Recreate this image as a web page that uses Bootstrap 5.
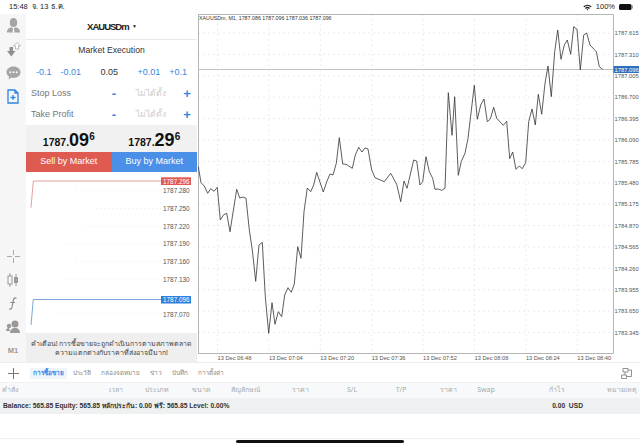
<!DOCTYPE html>
<html lang="th">

<head>
    <meta charset="UTF-8">
    <meta name="viewport" content="width=device-width, initial-scale=1.0">
    <title>MT5 XAUUSDm</title>
    <link href="https://cdn.jsdelivr.net/npm/bootstrap@5.3.3/dist/css/bootstrap.min.css" rel="stylesheet">
    <style>
        html, body { width: 640px; height: 447px; overflow: hidden; background: #fff; }
        body { font-family: "Liberation Sans", "Noto Sans", sans-serif; color: #222; font-size: 10px; line-height: 1; }
        .status-row { height: 14px; padding: 0 7px 0 9px; font-size: 7.5px; color: #222; }
        .main-row { height: 348px; background: #f6f6f6; }
        .side-rail { width: 26px; background: #f6f6f6; }
        .rail-btn { height: 23.7px; width: 26px; }
        .rail-btn.low { height: 23.4px; }
        .order-panel { width: 171px; background: #fff; }
        .symbol-head { height: 26px; font-size: 9.5px; font-weight: 700; letter-spacing: -1px; border-bottom: 1px solid #e8e8e8; }
        .exec-title { height: 21px; font-size: 8.6px; color: #333; }
        .step-row { height: 22px; padding: 0 10px; font-size: 9px; color: #3b86e0; }
        .step-row .vol { color: #333; }
        .step-group { gap: 9px; }
        .level-row { height: 21px; padding: 0 4px 0 5px; color: #777; font-size: 9px; }
        .level-row b { color: #2f86e6; font-weight: 700; font-size: 13px; width: 12px; text-align: center; }
        .level-row .unset { color: #ccc; font-size: 8.5px; width: 61px; text-align: center; font-family: "Noto Sans", sans-serif; }
        .price-row { height: 27px; background: #f1f1f1; font-weight: 700; font-size: 10.5px; color: #111; }
        .price-cell { width: 50%; padding-top: 2px; }
        .price-cell .big { font-size: 18px; }
        .price-cell sup { font-size: 10px; top: -.55em; }
        .trade-btn { width: 50%; height: 20px; border-radius: 0; border: 0; padding: 0; font-size: 9px; color: #fff; --bs-btn-color: #fff; }
        .trade-sell { background: #df5a50; }
        .trade-buy { background: #4a90e8; }
        .tick-box { height: 161px; }
        .warn-box { height: 29px; padding-top: 6px; background: #efefef; color: #444; font-size: 7px; line-height: 9px; white-space: nowrap; font-family: "Noto Sans", "Liberation Sans", sans-serif; }
        .chart-side { background: #fff; }
        svg text { font-family: "Liberation Sans", sans-serif; }
        .tab-row { height: 21px; padding-top: 2px; border-top: 1px solid #eee; border-bottom: 1px solid #f1f1f1; }
        .tab-add { width: 26px; }
        .tab-link { font-size: 6.4px; color: #888; margin-right: 10px; font-family: "Noto Sans", sans-serif; }
        .tab-link.on { color: #2f86e6; font-weight: 700; background: #eef5fd; padding: 2px 3px; margin-left: 4px; margin-right: 6px; }
        .head-row { height: 15px; background: #f7f9fb; color: #aaa; font-size: 7px; font-family: "Noto Sans", "Liberation Sans", sans-serif; position: relative; }
        .head-row > span { position: absolute; top: 3px; transform: translateX(-50%); }
        .sum-row { height: 16px; padding: 0 57px 0 3px; background: #eef0f1; color: #333; font-size: 6.7px; font-weight: 700; font-family: "Liberation Sans", "Noto Sans", sans-serif; }
        .foot-line { height: 25px; border-bottom: 1px solid #f0f0f0; }
        .home-bar { width: 168px; height: 3px; background: #111; border-radius: 2px; margin: 1px auto 0; }
    </style>
</head>

<body>
    <div class="status-row d-flex justify-content-between align-items-center">
        <div>15:48&nbsp; จ. 13 ธ.ค.</div>
        <div class="d-flex align-items-center gap-1">
            <svg width="9" height="7" viewBox="0 0 9 7"><path d="M.3 2.400a6 6 0 0 1 8.400 0L7.800 3.300a4.800 4.800 0 0 0-6.600 0zM2 4a3.600 3.600 0 0 1 5 0l-.9.9a2.300 2.300 0 0 0-3.200 0zM3.600 5.500a1.300 1.300 0 0 1 1.800 0L4.500 6.600z" fill="#222"/></svg>
            <span>100%</span>
            <svg width="14" height="6" viewBox="0 0 14 6"><rect width="12.500" height="6" rx="1.500" fill="#111"/><rect x="13" y="1.500" width="1" height="3" fill="#999"/></svg>
        </div>
    </div>

    <div class="main-row d-flex">
        <div class="side-rail d-flex flex-column">
            <div class="rail-btn d-flex justify-content-center align-items-center">
                <svg width="15" height="15" viewBox="0 0 15 15" fill="#a5a5a5"><ellipse cx="7.500" cy="4.500" rx="3.700" ry="4.500"/><path d="M1 14.500c0-3.500 2-5 4.500-5.300L7.500 11l2-1.800c2.500.3 4.500 1.800 4.500 5.300z"/><path d="M7 11h1l.5 3.500h-2z" fill="#fff"/></svg>
            </div>
            <div class="rail-btn d-flex justify-content-center align-items-center">
                <svg width="15" height="15" viewBox="0 0 15 15"><path d="M1 9h2.500V5h3.500v4h2.500l-4.200 5.500z" fill="#8f8f8f"/><path d="M9.500 7V4H7.500L11 .5 14.500 4H12.500v3z" fill="#fff" stroke="#aaa" stroke-width=".8"/></svg>
            </div>
            <div class="rail-btn d-flex justify-content-center align-items-center">
                <svg width="15" height="14" viewBox="0 0 15 14"><path d="M7.500.5c3.900 0 7 2.500 7 5.700s-3.100 5.700-7 5.700c-.8 0-1.500-.1-2.200-.3L2.500 13.500l.6-3C1.500 9.500.5 8 .5 6.200.5 3 3.600.5 7.500.5z" fill="#a5a5a5"/><circle cx="4.300" cy="6.200" r="1" fill="#fff"/><circle cx="7.500" cy="6.200" r="1" fill="#fff"/><circle cx="10.700" cy="6.200" r="1" fill="#fff"/></svg>
            </div>
            <div class="rail-btn d-flex justify-content-center align-items-center">
                <svg width="12" height="15" viewBox="0 0 12 15" fill="none" stroke="#2f86e6" stroke-width="1.300"><path d="M1 1h7l3 3v10H1zM8 1v3h3M3.500 8.500h5M6 6v5"/></svg>
            </div>
            <div class="flex-grow-1"></div>
            <div class="rail-btn low d-flex justify-content-center align-items-center">
                <svg width="13" height="13" viewBox="0 0 13 13" fill="none" stroke="#aaa"><path d="M6.500 0v5M6.500 8v5M0 6.500h5M8 6.500h5"/></svg>
            </div>
            <div class="rail-btn low d-flex justify-content-center align-items-center">
                <svg width="12" height="14" viewBox="0 0 12 14" fill="#999"><path d="M3 0v3M9 1v3M3 11v3M9 10v3" stroke="#999"/><rect x="1" y="3" width="4" height="8" fill="none" stroke="#999"/><rect x="7" y="4" width="4" height="6"/></svg>
            </div>
            <div class="rail-btn low d-flex justify-content-center align-items-center">
                <svg width="10" height="13" viewBox="0 0 10 13" fill="none" stroke="#888" stroke-width="1.100"><path d="M8.500 1.200C6 .2 5.500 2 5 5L4 10c-.4 2-1.500 2.500-3 1.800M2.500 5.500h4.500"/></svg>
            </div>
            <div class="rail-btn low d-flex justify-content-center align-items-center">
                <svg width="15" height="13" viewBox="0 0 15 13" fill="#999"><circle cx="9" cy="4" r="3.500"/><path d="M4 13c0-3 2-5 5-5s5 2 5 5z"/><circle cx="3" cy="6" r="2.200"/><path d="M0 11c0-2 1-3 3-3l1 3z"/></svg>
            </div>
            <div class="rail-btn low d-flex justify-content-center align-items-center fw-bold" style="color:#999;font-size:7.5px">M1</div>
        </div>

        <div class="order-panel d-flex flex-column">
            <div class="symbol-head d-flex justify-content-center align-items-center">XAUUSDm&nbsp;&nbsp;<span style="font-size:5px">▼</span></div>
            <div class="exec-title d-flex justify-content-center align-items-center">Market Execution</div>
            <div class="step-row d-flex justify-content-between align-items-center">
                <div class="d-flex step-group"><span>-0.1</span><span>-0.01</span></div>
                <span class="vol">0.05</span>
                <div class="d-flex step-group"><span>+0.01</span><span>+0.1</span></div>
            </div>
            <div class="level-row d-flex align-items-center">
                <span class="flex-grow-1">Stop Loss</span>
                <b>-</b><span class="unset">ไม่ได้ตั้ง</span><b>+</b>
            </div>
            <div class="level-row d-flex align-items-center">
                <span class="flex-grow-1">Take Profit</span>
                <b>-</b><span class="unset">ไม่ได้ตั้ง</span><b>+</b>
            </div>
            <div class="price-row d-flex align-items-center">
                <div class="price-cell text-center">1787.<span class="big">09</span><sup>6</sup></div>
                <div class="price-cell text-center">1787.<span class="big">29</span><sup>6</sup></div>
            </div>
            <div class="d-flex">
                <button type="button" class="btn trade-btn trade-sell">Sell by Market</button>
                <button type="button" class="btn trade-btn trade-buy">Buy by Market</button>
            </div>
            <div class="tick-box">
                <svg width="171" height="161" viewBox="0 0 171 161">
                    <g stroke="#ddd" stroke-width=".6" stroke-dasharray="1 3">
                        <path d="M50 18.500h85M70 36.500h65M60 54.500h75M40 72h95M50 89.500h85M40 107h95M30 142h105"/>
                    </g>
                    <path d="M5 35.700L7.300 9H135" fill="none" stroke="#e6a19b"/>
                    <path d="M5 153L7.300 127.500H135" fill="none" stroke="#7ea6d8"/>
                    <g font-size="6.400" fill="#555">
                        <text x="137" y="21">1787.280</text>
                        <text x="137" y="39">1787.250</text>
                        <text x="137" y="57">1787.220</text>
                        <text x="137" y="74.300">1787.190</text>
                        <text x="137" y="92">1787.160</text>
                        <text x="137" y="110">1787.130</text>
                        <text x="137" y="144.500">1787.070</text>
                    </g>
                    <rect x="135" y="5.300" width="30" height="7.700" fill="#df5a50"/>
                    <text x="137" y="11.500" font-size="6.400" fill="#fff">1787.296</text>
                    <rect x="135" y="124" width="30" height="7.500" fill="#2f7fdc"/>
                    <text x="137" y="130" font-size="6.400" fill="#fff">1787.096</text>
                </svg>
            </div>
            <div class="warn-box text-center">คำเตือน! การซื้อขายจะถูกดำเนินการตามสภาพตลาด<br>ความแตกต่างกับราคาที่ส่งอาจมีมาก!</div>
        </div>

        <div class="chart-side flex-grow-1">
            <svg id="price-chart" width="443" height="348" viewBox="197 14 443 348"></svg>
        </div>
    </div>

    <div class="tab-row d-flex align-items-center">
        <div class="tab-add text-center">
            <svg width="11" height="11" viewBox="0 0 11 11" fill="none" stroke="#777"><path d="M5.500 0v11M0 5.500h11"/></svg>
        </div>
        <span class="tab-link on">การซื้อขาย</span>
        <span class="tab-link">ประวัติ</span>
        <span class="tab-link">กล่องจดหมาย</span>
        <span class="tab-link">ข่าว</span>
        <span class="tab-link">บันทึก</span>
        <span class="tab-link">การตั้งค่า</span>
        <div class="flex-grow-1"></div>
        <svg class="me-2" width="11" height="11" viewBox="0 0 11 11" fill="none" stroke="#777" stroke-width=".8"><path d="M2 .5h5v3.500H2zM.5 7h5v3.500H.5zM7 2h3.500v6.500H6M4 4v3"/></svg>
    </div>
    <div class="head-row">
        <span style="left:10px">คำสั่ง</span>
        <span style="left:116px">เวลา</span>
        <span style="left:157px">ประเภท</span>
        <span style="left:201px">ขนาด</span>
        <span style="left:245px">สัญลักษณ์</span>
        <span style="left:300px">ราคา</span>
        <span style="left:352px">S/L</span>
        <span style="left:401px">T/P</span>
        <span style="left:448px">ราคา</span>
        <span style="left:486px">Swap</span>
        <span style="left:557px">กำไร</span>
        <span style="left:622px">หมายเหตุ</span>
    </div>
    <div class="sum-row d-flex justify-content-between align-items-center">
        <span>Balance: 565.85 Equity: 565.85 หลักประกัน: 0.00 ฟรี: 565.85 Level: 0.00%</span>
        <span>0.00&nbsp; USD</span>
    </div>
    <div class="foot-line"></div>
    <div class="home-bar"></div>

    <script>
        const line = [[198.3,166.7],[201,182.7],[204.3,186],[207.7,193.3],[210.7,188.7],[214,191.3],[217.3,187.3],[220.3,220],[223.7,214.7],[226.7,213.3],[230,231.7],[236.7,189.3],[239.7,198],[243,197],[246,198.3],[249.3,230],[252.3,250],[255.7,281.3],[259,245],[262.3,242.3],[265.3,296.7],[268.7,333.3],[272,302.7],[275,324.3],[278.3,311.7],[281.7,316.7],[284.7,295],[288,287.7],[291.3,292.3],[294.3,284],[297.7,246.7],[301,258.3],[304,211.7],[307.3,188],[310.7,191.7],[313.7,185],[316.7,172.3],[323.3,192],[327,181],[330,174],[333,175],[336.3,163.3],[339.3,137.7],[342.7,164],[346,164.3],[352.3,168.3],[355.3,155],[358.7,147.3],[362,152],[365,148],[368,149],[371.7,170],[375,177.7],[384.3,181.7],[390.7,173.3],[396.7,184.3],[400.7,201.7],[404,181],[407,188.3],[413.7,160],[416.7,161],[420,185],[422.7,181.7],[426,156.7],[429.3,171.7],[432.7,178.3],[435,189.3],[438.3,189],[441.7,190.3],[445,188.3],[448.3,92.7],[452,135.3],[454.7,96.7],[458.3,175.3],[461.3,161.3],[465,153.3],[468,138.3],[474.3,85.3],[477.3,119.3],[480.7,105],[484,99],[487.3,121.7],[490.3,119],[493.7,107.3],[496.7,118.3],[503.3,125.3],[506.7,121.3],[509.7,158.7],[512.7,152],[516,169.3],[519.3,166],[522.3,168.7],[525.7,162.7],[528.7,121.7],[532,109],[535.3,125],[538.3,94.3],[541.7,114.3],[545,83.3],[548,66],[551.3,96.7],[554.7,51.7],[557.7,30],[561,59.3],[564.3,45],[567.3,40],[570.7,54.3],[573.7,26.7],[577,29.3],[580.3,70],[583.7,35],[586.7,33],[590,45],[596.3,51.7],[599.3,66.7],[602.7,69.3]];
        const yLabels = ['1787.615','1787.310','1787.005','1786.700','1786.395','1786.090','1785.785','1785.480','1785.175','1784.870','1784.565','1784.260','1783.955','1783.650','1783.345'];
        const xLabels = ['13 Dec 06:48','13 Dec 07:04','13 Dec 07:20','13 Dec 07:36','13 Dec 07:52','13 Dec 08:08','13 Dec 08:24','13 Dec 08:40'];
        let svg = '<rect x="197" y="14" width="443" height="348" fill="#fff"/>';
        // grid
        yLabels.forEach((t, i) => {
            const y = 33 + i * 21.4;
            svg += `<line x1="198" x2="613" y1="${y}" y2="${y}" stroke="#ddd" stroke-width=".6" stroke-dasharray="2 3"/>`;
            svg += `<text x="614.500" y="${y + 2.2}" font-size="5.800" fill="#555">${t}</text>`;
        });
        xLabels.forEach((t, i) => {
            const x = 217.5 + i * 51.4;
            svg += `<line x1="${x}" x2="${x}" y1="14" y2="354" stroke="#ddd" stroke-width=".6" stroke-dasharray="2 3"/>`;
            svg += `<text x="${x}" y="360" font-size="5.700" fill="#555">${t}</text>`;
        });
        svg += '<path d="M198.500 14.500H613.500V353.500H198.500z" fill="none" stroke="#b5b5b5"/>';
        svg += '<line x1="198" x2="613" y1="69.500" y2="69.500" stroke="#c4c4c4"/>';
        svg += `<polyline points="${line.map(p => p.join(',')).join(' ')}" fill="none" stroke="#333" stroke-width=".8"/>`;
        svg += '<text x="199" y="20" font-size="5.300" fill="#333">XAUUSDm, M1, 1787.086 1787.096 1787.036 1787.096</text>';
        svg += '<rect x="613.500" y="66" width="25.500" height="7" fill="#2f6fb8"/><text x="614.500" y="71.800" font-size="5.800" fill="#fff">1787.096</text>';
        document.getElementById('price-chart').innerHTML = svg;
    </script>
    <script src="https://cdn.jsdelivr.net/npm/bootstrap@5.3.3/dist/js/bootstrap.bundle.min.js"></script>
</body>

</html>
